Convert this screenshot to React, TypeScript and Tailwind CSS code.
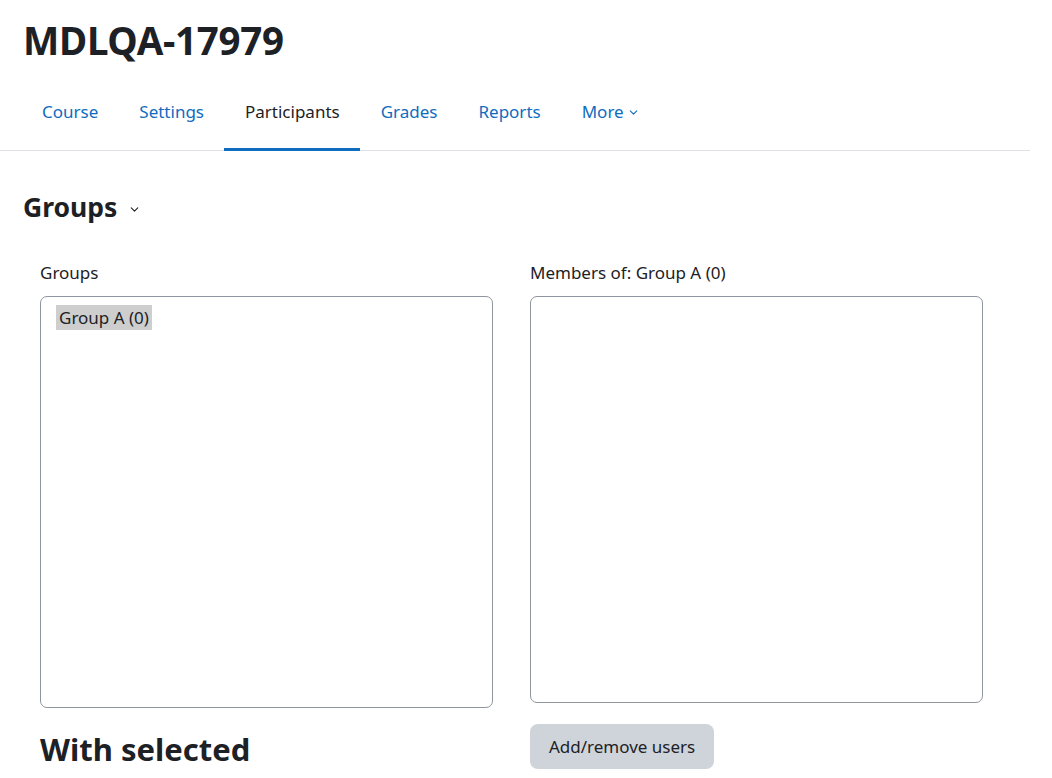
import { ChevronDown } from 'lucide-react';

const tabs = ['Course', 'Settings', 'Participants', 'Grades', 'Reports'];

export default function App() {
  return (
    <div className="min-h-[778px] bg-white text-[#1d2125] font-['Noto_Sans',sans-serif] text-[17px]">
      <div className="w-[1030px]">
        <h1 className="px-[23px] pt-[16px] text-[38.5px] font-bold leading-[48px] tracking-[-0.3px]">MDLQA-17979</h1>

        {/* Secondary nav */}
        <nav className="mt-[10px] flex border-b border-[#dee2e6] pl-[21.5px]">
          {tabs.map(t => (
            <a
              key={t}
              className={
                t === 'Participants'
                  ? 'mb-[-1px] flex h-[77px] items-center border-b-[3px] border-[#0f6cbf] px-[20.5px] pt-[2px] text-[#1d2125]'
                  : 'flex h-[76px] items-center px-[20.5px] text-[#0f6cbf]'
              }
            >
              {t}
            </a>
          ))}
          <a className="flex h-[76px] items-center gap-[3px] px-[20.5px] text-[#0f6cbf]">
            More <ChevronDown size={13} strokeWidth={2} className="mt-[1px]" />
          </a>
        </nav>
      </div>

      <div className="px-[23px]">
        <div className="mt-[38px] flex items-center gap-[11px]">
          <h2 className="text-[26.5px] font-bold leading-[36px]">Groups</h2>
          <ChevronDown size={13} strokeWidth={2} className="mt-[4px]" />
        </div>

        <div className="mt-[35px] flex gap-[37px] pl-[17px]">
          <div className="w-[453px]">
            <label className="block leading-[26px]">Groups</label>
            <div className="mt-[10px] h-[412px] rounded-[7px] border border-[#8f959e] px-[15px] py-[8px]">
              <span className="inline-block bg-[#cecece] px-[3px] leading-[25px]">Group A (0)</span>
            </div>
            <h3 className="mt-[21px] text-[31px] font-bold leading-[40px]">With selected</h3>
          </div>
          <div className="w-[453px]">
            <label className="block leading-[26px]">Members of: Group A (0)</label>
            <div className="mt-[10px] h-[407px] rounded-[7px] border border-[#8f959e]" />
            <button className="mt-[21px] h-[45px] rounded-[8px] bg-[#ced4da] px-[19px] text-[#1d2125]">
              Add/remove users
            </button>
          </div>
        </div>
      </div>
    </div>
  );
}
